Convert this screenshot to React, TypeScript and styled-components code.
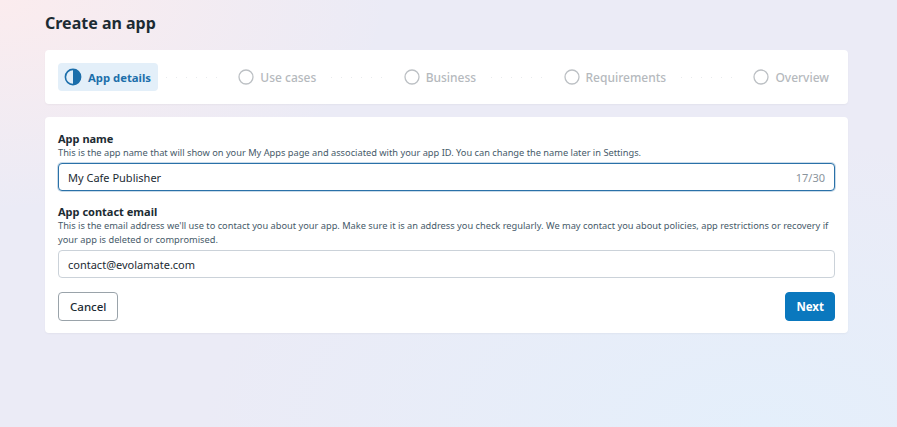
import styled, { createGlobalStyle } from "styled-components";
import { Fragment, useState } from "react";

const GlobalStyle = createGlobalStyle`
  html, body {
    margin: 0;
    padding: 0;
  }
  body {
    font-family: "Noto Sans", "Open Sans", Arial, sans-serif;
    color: #1c2b33;
  }
  * {
    box-sizing: border-box;
  }
`;

const Page = styled.div`
  width: 897px;
  height: 427px;
  overflow: hidden;
  background:
    radial-gradient(ellipse 520px 280px at 0% 0%, rgba(251, 236, 238, 1), rgba(251, 236, 238, 0) 75%),
    radial-gradient(ellipse 700px 360px at 85% 100%, rgba(228, 239, 251, 1), rgba(228, 239, 251, 0) 80%),
    #ebebf6;
  padding: 12px 49px 0 45px;
  display: flex;
  flex-direction: column;
`;

const Title = styled.h1`
  margin: 0 0 16px 0;
  font-size: 16px;
  line-height: 22px;
  font-weight: 700;
  color: #1c2b33;
`;

const Card = styled.div`
  background: #ffffff;
  border-radius: 4px;
  box-shadow: 0 1px 2px rgba(0, 0, 0, 0.04);
`;

const StepperCard = styled(Card)`
  height: 54px;
  padding: 0 12px 0 13px;
  display: flex;
  align-items: center;
  margin-bottom: 13px;
`;

const Step = styled.div<{ $active?: boolean }>`
  display: flex;
  align-items: center;
  gap: 6px;
  height: 28px;
  padding: 0 7px 0 6px;
  border-radius: 4px;
  background: ${({ $active }) => ($active ? "#e3eff9" : "transparent")};
  color: ${({ $active }) => ($active ? "#1c6fab" : "#b5b9bd")};
  font-size: ${({ $active }) => ($active ? "11.3px" : "12px")};
  font-weight: ${({ $active }) => ($active ? 700 : 500)};
  white-space: nowrap;
  flex: none;
`;

const Connector = styled.div`
  flex: 1;
  height: 1px;
  margin: 0 8px;
  background-image: linear-gradient(to right, #e9ebed 1.5px, transparent 1.5px);
  background-size: 10px 1px;
  background-repeat: repeat-x;
`;

const FormCard = styled(Card)`
  padding: 13px 13px 12px 13px;
  display: flex;
  flex-direction: column;
`;

const Field = styled.div`
  display: flex;
  flex-direction: column;
  margin-bottom: 12px;
`;

const Label = styled.label`
  font-size: 11px;
  line-height: 14px;
  font-weight: 700;
  color: #1c2b33;
  margin-top: 2px;
`;

const Help = styled.p`
  margin: 0 0 3px 0;
  font-size: 9.25px;
  line-height: 14px;
  color: #465a69;
`;

const InputBox = styled.div<{ $focused?: boolean }>`
  height: 28px;
  display: flex;
  align-items: center;
  padding: 0 9px;
  border-radius: 4px;
  border: 1px solid ${({ $focused }) => ($focused ? "#2a71a8" : "#cbd2d9")};
  box-shadow: ${({ $focused }) => ($focused ? "0 0 0 1px rgba(42,113,168,0.25)" : "none")};
  background: #fff;
`;

const Input = styled.input`
  flex: 1;
  border: none;
  outline: none;
  padding: 0;
  font-family: inherit;
  font-size: 11px;
  color: #1c2b33;
  background: transparent;
  caret-color: #1c2b33;
`;

const Counter = styled.span`
  font-size: 11px;
  color: #8a949c;
`;

const Actions = styled.div`
  display: flex;
  justify-content: space-between;
  align-items: center;
  margin-top: 2px;
`;

const Button = styled.button<{ $primary?: boolean }>`
  height: 29px;
  padding: 0 ${({ $primary }) => ($primary ? "10px" : "11px")};
  border-radius: 4px;
  font-family: inherit;
  font-size: 11.5px;
  font-weight: ${({ $primary }) => ($primary ? 700 : 500)};
  cursor: pointer;
  border: 1px solid ${({ $primary }) => ($primary ? "#0a78be" : "#9aa3aa")};
  background: ${({ $primary }) => ($primary ? "#0a78be" : "#ffffff")};
  color: ${({ $primary }) => ($primary ? "#ffffff" : "#1c2b33")};
`;

const HalfCircle = () => (
  <svg width="18" height="18" viewBox="0 0 18 18">
    <circle cx="9" cy="9" r="7.6" fill="none" stroke="#1c6fab" strokeWidth="1.6" />
    <path d="M9 1.4 A7.6 7.6 0 0 1 9 16.6 Z" fill="#1c6fab" />
  </svg>
);

const EmptyCircle = () => (
  <svg width="16" height="16" viewBox="0 0 16 16">
    <circle cx="8" cy="8" r="7" fill="none" stroke="#bcc0c4" strokeWidth="1.3" />
  </svg>
);

const steps = ["App details", "Use cases", "Business", "Requirements", "Overview"];

export default function App() {
  const [name, setName] = useState("My Cafe Publisher");
  const [email, setEmail] = useState("contact@evolamate.com");

  return (
    <>
      <GlobalStyle />
      <Page>
        <Title>Create an app</Title>
        <StepperCard>
          {steps.map((s, i) => (
            <Fragment key={s}>
              {i > 0 && <Connector />}
              <Step $active={i === 0}>
                {i === 0 ? <HalfCircle /> : <EmptyCircle />}
                {s}
              </Step>
            </Fragment>
          ))}
        </StepperCard>
        <FormCard>
          <Field>
            <Label htmlFor="appName">App name</Label>
            <Help>
              This is the app name that will show on your My Apps page and associated with your app ID. You can
              change the name later in Settings.
            </Help>
            <InputBox $focused>
              <Input id="appName" value={name} maxLength={30} onChange={(e) => setName(e.target.value)} />
              <Counter>{name.length}/30</Counter>
            </InputBox>
          </Field>
          <Field>
            <Label htmlFor="appEmail">App contact email</Label>
            <Help>
              This is the email address we'll use to contact you about your app. Make sure it is an address you
              check regularly. We may contact you about policies, app restrictions or recovery if your app is
              deleted or compromised.
            </Help>
            <InputBox>
              <Input id="appEmail" value={email} onChange={(e) => setEmail(e.target.value)} />
            </InputBox>
          </Field>
          <Actions>
            <Button>Cancel</Button>
            <Button $primary>Next</Button>
          </Actions>
        </FormCard>
      </Page>
    </>
  );
}
